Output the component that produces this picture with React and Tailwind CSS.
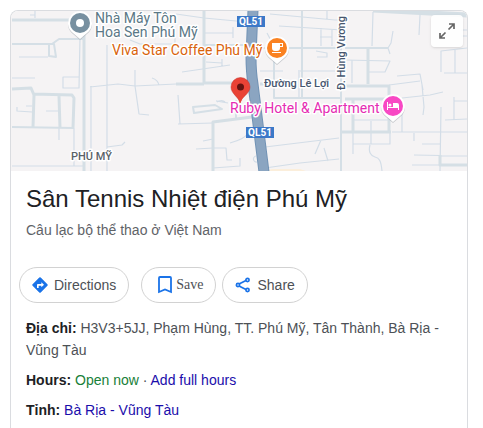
// Street geometry for the map preview, grouped by stroke width
const lanes = [
  'M30 15H35M35 11V18', 'M19 57H48', 'M12 78H35', 'M63 87V77H79', 'M80 38L79 88H63V78', 'M107 45V171',
  'M90 87L118 84L135 86L176 84', 'M135 70V86L139 114L149 115', 'M152 78Q158 80 159 85', 'M130 40L140 44H175V38',
  'M176 14L204 18L247 22', 'M204 33H233M233 27V38', 'M182 72L230 65', 'M206 62L222 63M222 59V66',
  'M270 14L335 20L342 20', 'M279 26L342 30', 'M321 28V46M332 30V46M320 37H332', 'M327 11V19', 'M316 51L327 53V57H317',
  'M267 33L275 48', 'M260 71H283M300 71H335', 'M373 12L372 46', 'M420 15L419 35', 'M393 31L391 43L388 48L390 54',
  'M345 60L390 61L385 72H369', 'M352 60V83', 'M397 76L420 74L423 90', 'M389 85L420 81', 'M441 72V51L467 48M455 50V73M444 73H467',
  'M461 30H467M461 36H467', 'M402 98L430 95L443 92', 'M422 85L424 107L423 115', 'M353 120H392', 'M402 110V132',
  'M371 121V144', 'M353 132V154M353 144H390V132', 'M370 145C368 152 371 156 375 157S381 160 382 171', 'M392 132H467',
  'M441 107L440 171', 'M454 97V120M454 101H467M445 120L467 119', 'M414 133V141', 'M422 144H440', 'M414 155L467 156',
  'M412 165H440', 'M59 128V140', 'M74 128V166M12 166H84', 'M17 107V111L32 112M26 106H32M46 111H58', 'M91 86V171',
  'M107 147L122 145L125 142', 'M178 95L180 124M178 124L213 123', 'M216 101L228 103', 'M203 141L213 139M196 149L213 148H226L227 160H232',
  'M213 168L240 166V158', 'M230 143Q245 139 248 133', 'M265 147L339 138M321 140L315 154M324 148L328 161',
  'M265 168L300 163L339 159', 'M299 70V97', 'M256 156a3 3 0 1 0 1 6', 'M216 101L225 102', 'M217 102Q222 99 225 102',
]

const streets = [
  'M12 44H52L59 39H85', 'M49 44H54L56 57L49 56Z', 'M12 127L74 128', 'M193 107L215 105L222 109L194 113Z',
  'M204 45H250', 'M302 11V98', 'M274 50V98H341', 'M260 48H342', 'M341 48V171', 'M345 48H388', 'M236 100V118',
]

const avenues = [
  'M12 20H84V171', 'M12 89L31 88L34 95L33 127', 'M33 94L72 95L74 98L73 128', 'M59 96L60 128', 'M204 11V83H240M260 84H267',
  'M176 84H204', 'M213 171V122L252 117', 'M368 48V84', 'M345 86H389V132', 'M345 99H389', 'M353 99V132M342 132H391',
  'M440 155V165H467',
]

function Shield({ x, y }) {
  return (
    <g>
      <rect x={x} y={y} width="28" height="11" fill="#3c78c8" />
      <text x={x + 14} y={y + 9} textAnchor="middle" className="text-[10px] font-bold" fill="#fff">QL51</text>
    </g>
  )
}

function Pin({ x, y, color, children }) {
  return (
    <g transform={`translate(${x} ${y})`}>
      <path d="M0 16L-7 10A12 12 0 1 1 7 10Z" fill="#9aa0a6" opacity=".5" transform="translate(0 1)" />
      <path d="M0 16L-7 10A12 12 0 1 1 7 10Z" fill="#fff" />
      <circle r="10" fill={color} />
      {children}
    </g>
  )
}

function MapPreview() {
  return (
    <svg
      className="block h-40 w-full font-[Roboto,sans-serif]"
      viewBox="11 11 456 160"
      preserveAspectRatio="xMidYMid slice"
      role="img"
      aria-label="Map of Phú Mỹ"
    >
      <rect x="11" y="11" width="456" height="160" fill="#f5f3f4" />
      <path d="M266 171L272 169H300L306 171Z" fill="#fbeedb" />
      <g fill="none" stroke="#d3dde7" strokeLinejoin="round">
        <path d={lanes.join('')} strokeWidth="1.2" />
        <path d={streets.join('')} strokeWidth="2" stroke="#d5dfe6" />
        <path d={avenues.join('')} strokeWidth="3" stroke="#d5dfe5" />
        <path d="M373 10L467 15" strokeWidth="5" stroke="#d5dfe5" />
      </g>

      {/* National road 51 */}
      <g fill="none">
        <path d="M253 10L251 56Q251 72 253 84L264 172" stroke="#7293b5" strokeWidth="11" />
        <path d="M253 10L251 56Q251 72 253 84L264 172" stroke="#8ba5c1" strokeWidth="9" />
      </g>
      <Shield x={237} y={16} />
      <Shield x={246} y={127} />

      <g stroke="#fff" strokeWidth="3" strokeLinejoin="round" paintOrder="stroke" className="text-[14px]">
        <text x="95" y="23" fill="#5b7886">Nhà Máy Tôn</text>
        <text x="95" y="37" fill="#5b7886">Hoa Sen Phú Mỹ</text>
        <text x="112" y="55" fill="#d9630b">Viva Star Coffee Phú Mỹ</text>
        <g className="text-[11px] font-medium" fill="#46566e">
          <text x="264" y="87">Đường Lê Lợi</text>
          <text transform="translate(345 90) rotate(-90)">Đ. Hùng Vương</text>
        </g>
        <text x="71" y="160" fill="#5a6268" className="text-[11px] font-medium">PHÚ MỸ</text>
      </g>

      <Pin x={80} y={23} color="#7890a0">
        <circle r="4" fill="#fff" />
      </Pin>
      <Pin x={277} y={48} color="#fa8222">
        <path d="M-5 -5H6V-1H3V0Q3 3 0 3H-2Q-5 3 -5 0ZM3 -4V-2H5V-4Z" fill="#fff" fillRule="evenodd" />
        <path d="M-5 4H4V5H-5Z" fill="#fff" />
      </Pin>
      <Pin x={393} y={106} color="#f848c4">
        <path d="M-6 -4H-5V1H5V4H6V-1Q6 -3 4 -3H0V1H5V2H-5V4H-6Z" fill="#fff" />
        <circle cx="-3" cy="-1" r="1.5" fill="#fff" />
      </Pin>

      {/* Selected place */}
      <path d="M240 103C239 97 231 94 231 87A9 9 0 0 1 250 87C250 94 241 97 240 103Z" fill="#e94235" stroke="#c5332b" strokeWidth=".5" />
      <circle cx="240.5" cy="87" r="3.5" fill="#641310" />
      <text x="230" y="113" fill="#e52cb3" stroke="#fff" strokeWidth="3" strokeLinejoin="round" paintOrder="stroke" className="text-[14px]">
        Ruby Hotel &amp; Apartment
      </text>
      <path d="M238 97H243L240.5 103Z" fill="#e94235" />
    </svg>
  )
}

function DirectionsIcon() {
  return (
    <svg width="16" height="16" viewBox="0 0 24 24" fill="#1a73e8" aria-hidden="true">
      <path d="M23.1 10.900L13.1.9a1.550 1.550 0 0 0-2.200 0l-10 10a1.550 1.550 0 0 0 0 2.200l10 10c.6.6 1.6.6 2.200 0l10-10c.6-.6.6-1.600 0-2.200zM14 15.500V13h-4v3.500H7.500V12c0-.8.7-1.500 1.500-1.500h5V8l4 3.750z" />
    </svg>
  )
}

function SaveIcon() {
  return (
    <svg width="14" height="18" viewBox="0 0 14 18" fill="none" stroke="#1a73e8" strokeWidth="1.8" aria-hidden="true">
      <path d="M1 2Q1 1 2 1H12Q13 1 13 2V16L7 13.5L1 16Z" />
    </svg>
  )
}

function ShareIcon() {
  return (
    <svg width="16" height="16" viewBox="0 0 16 16" fill="none" stroke="#1a73e8" strokeWidth="1.7" aria-hidden="true">
      <path d="M4 7L11 3.5M4 9L11 12.5" />
      <circle cx="3" cy="8" r="1.6" />
      <circle cx="12.5" cy="3" r="1.6" />
      <circle cx="12.5" cy="13" r="1.6" />
    </svg>
  )
}

const pill = 'flex h-9 items-center rounded-full border border-[#d2d2d2] text-[#4d5156]'

export default function App() {
  return (
    <div className="min-h-screen bg-white pt-[10px] pr-[15px] pl-[10px] font-['Liberation_Sans',Arial,sans-serif] text-sm text-[#4d5156]">
      <main className="min-h-[418px] overflow-hidden rounded-t-lg border border-b-0 border-[#dadce0]">
        <div className="relative">
          <MapPreview />
          <button
            type="button"
            aria-label="Expand map"
            className="absolute top-1 right-1 flex size-8 items-center justify-center rounded-sm bg-white/90 text-[#666] shadow-sm"
          >
            <svg width="18" height="18" viewBox="0 0 18 18" fill="none" stroke="currentColor" strokeWidth="1.7" aria-hidden="true">
              <path d="M11 2H16V7M16 2L10.5 7.5M7 16H2V11M2 16L7.5 10.5" />
            </svg>
          </button>
        </div>

        <header className="px-[15px] pt-3">
          <h1 className="text-2xl leading-8 text-[#202124]">Sân Tennis Nhiệt điện Phú Mỹ</h1>
          <p className="mt-1 leading-[22px] text-[#5f6368]">Câu lạc bộ thể thao ở Việt Nam</p>
        </header>

        <div className="mt-[26px] flex px-2">
          <button type="button" className={`${pill} gap-1.5 px-3`}>
            <DirectionsIcon />
            Directions
          </button>
          <button type="button" className={`${pill} ml-3 gap-1 pr-3 pl-4 font-['Liberation_Serif',serif]`}>
            <SaveIcon />
            Save
          </button>
          <button type="button" className={`${pill} ml-1.5 gap-1.5 px-3`}>
            <ShareIcon />
            Share
          </button>
        </div>

        <div className="flex flex-col gap-2 px-[15px] pt-[14px] leading-[22px]">
          <p>
            <b className="text-[#202124]">Địa chỉ:</b> H3V3+5JJ, Phạm Hùng, TT. Phú Mỹ, Tân Thành, Bà Rịa - Vũng Tàu
          </p>
          <p>
            <b className="text-[#202124]">Hours:</b> <span className="text-[#188038]">Open now</span> ·{' '}
            <a href="#hours" className="text-[#1a0dab]">Add full hours</a>
          </p>
          <p>
            <b className="text-[#202124]">Tỉnh:</b> <a href="#province" className="text-[#1a0dab]">Bà Rịa - Vũng Tàu</a>
          </p>
        </div>
      </main>
    </div>
  )
}
